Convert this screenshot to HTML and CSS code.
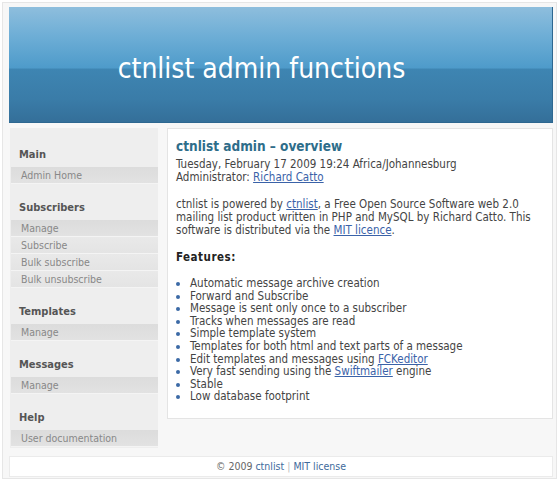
FILE: index.html
```html
<!DOCTYPE html>
<html>
<head>
<meta charset="utf-8">
<title>ctnlist admin functions</title>
<link rel="stylesheet" href="styles.css">
</head>
<body>
<div class="page">
  <header class="banner"><h1>ctnlist admin functions</h1></header>
  <div class="body-row">
    <nav class="sidebar">
      <h2>Main</h2>
      <ul class="menu"><li>Admin Home</li></ul>
      <h2>Subscribers</h2>
      <ul class="menu"><li>Manage</li><li>Subscribe</li><li>Bulk subscribe</li><li>Bulk unsubscribe</li></ul>
      <h2>Templates</h2>
      <ul class="menu"><li>Manage</li></ul>
      <h2>Messages</h2>
      <ul class="menu"><li>Manage</li></ul>
      <h2>Help</h2>
      <ul class="menu"><li>User documentation</li></ul>
    </nav>
    <main class="content">
      <h3>ctnlist admin &ndash; overview</h3>
      <p class="meta">Tuesday, February 17 2009 19:24 Africa/Johannesburg<br>Administrator: <a href="#">Richard Catto</a></p>
      <p>ctnlist is powered by <a href="#">ctnlist</a>, a Free Open Source Software web 2.0 mailing list product written in PHP and MySQL by Richard Catto. This software is distributed via the <a href="#">MIT licence</a>.</p>
      <p class="feat">Features:</p>
      <ul class="features">
        <li>Automatic message archive creation</li>
        <li>Forward and Subscribe</li>
        <li>Message is sent only once to a subscriber</li>
        <li>Tracks when messages are read</li>
        <li>Simple template system</li>
        <li>Templates for both html and text parts of a message</li>
        <li>Edit templates and messages using <a href="#">FCKeditor</a></li>
        <li>Very fast sending using the <a href="#">Swiftmailer</a> engine</li>
        <li>Stable</li>
        <li>Low database footprint</li>
      </ul>
    </main>
  </div>
  <footer class="footer">&copy; 2009 <a href="#">ctnlist</a> <span class="sep">|</span> <a href="#">MIT license</a></footer>
</div>
</body>
</html>
```
FILE: styles.css
```css
html, body { margin: 0; padding: 0; background: #ffffff; }
body {
  font-family: "DejaVu Sans Condensed", "DejaVu Sans", sans-serif;
  font-size: 11.5px;
  color: #444;
}
.page {
  margin: 2px 3px 2px 2px;
  border: 1px solid #e6e6e6;
  background: #f7f7f7;
  padding: 4px 3px 1px 6px;
}
.banner {
  height: 116px;
  box-sizing: border-box;
  border-right: 1px solid #2d6790;
  border-bottom: 1px solid #2d6790;
  background: linear-gradient(#8ebedd 0%, #6eaed6 25%, #4e9bca 53%, #3e85b2 54%, #3a7ca8 80%, #346f99 100%);
  display: flex;
  align-items: center;
  justify-content: center;
  padding-right: 38px;
}
.banner h1 {
  margin: 0;
  padding-top: 8px;
  font-weight: normal;
  font-size: 28px;
  color: #ffffff;
}
.body-row {
  display: flex;
  align-items: flex-start;
  gap: 9px;
  margin-top: 5px;
}
.sidebar {
  width: 148px;
  margin-left: 1px;
  background: #eeeeee;
  padding: 19px 0 1px 0;
}
.sidebar h2 {
  margin: 16px 0 4px 9px;
  font-size: 11px;
  line-height: 16px;
  font-weight: bold;
  color: #555;
}
.sidebar h2:first-child { margin-top: 0; }
.menu { list-style: none; margin: 0 0 0 1px; padding: 0; }
.menu li {
  height: 16px;
  line-height: 16px;
  padding-left: 10px;
  font-size: 10.5px;
  color: #888;
  background: linear-gradient(#e9e9e9, #e4e4e4);
  border-bottom: 1px solid #f4f4f4;
}
.menu li:first-child { background: linear-gradient(#dcdcdc, #e2e2e2); }
.content {
  flex: 1;
  background: #ffffff;
  border: 1px solid #e4e4e4;
  padding: 9px 8px 15px 8px;
  line-height: 13px;
}
.content h3 {
  margin: 0 0 4px 0;
  font-size: 13.5px;
  line-height: 16px;
  font-weight: bold;
  color: #2e6d8a;
}
.content p { margin: 0 0 14px 0; }
.content a { color: #3a62a8; }
.content .feat {
  font-weight: bold;
  color: #222;
  letter-spacing: 0.5px;
  margin-bottom: 13px;
}
.features {
  margin: 0;
  padding-left: 14px;
  line-height: 12.6px;
}
.features li::marker { color: #3b6aa6; }
.footer {
  margin-top: 8px;
  height: 21px;
  box-sizing: border-box;
  background: #ffffff;
  border: 1px solid #ebebeb;
  text-align: center;
  line-height: 19px;
  font-size: 10.5px;
  color: #666;
}
.footer a { color: #3e6a9c; text-decoration: none; }
.footer .sep { color: #bbb; }
```
